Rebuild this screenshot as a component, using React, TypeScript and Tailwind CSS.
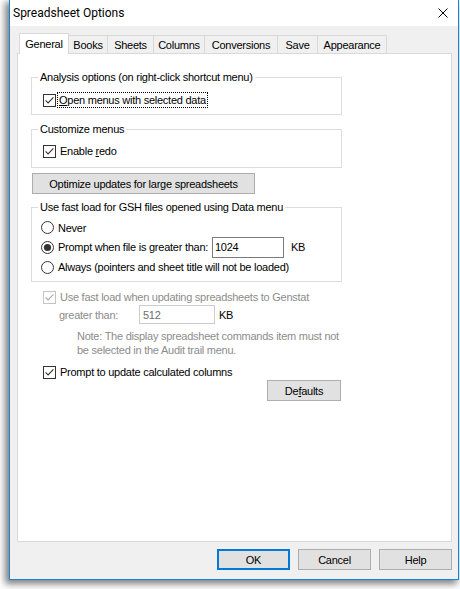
import React from "react";

function CheckBox({ checked = false, disabled = false }: { checked?: boolean; disabled?: boolean }) {
  const edge = disabled ? "#c4c4c4" : "#333333";
  const mark = disabled ? "#a8a8a8" : "#333333";
  return (
    <svg width="13" height="13" viewBox="0 0 13 13" className="shrink-0 block">
      <rect x="0.5" y="0.5" width="12" height="12" fill="#ffffff" stroke={edge} />
      {checked && <path d="M2.6 6.4 L5.1 9 L10.4 3.4" fill="none" stroke={mark} strokeWidth="1.1" />}
    </svg>
  );
}

function Radio({ checked = false }: { checked?: boolean }) {
  return (
    <svg width="13" height="13" viewBox="0 0 13 13" className="shrink-0 block">
      <circle cx="6.5" cy="6.5" r="6" fill="#ffffff" stroke="#333333" />
      {checked && <circle cx="6.5" cy="6.5" r="3.6" fill="#333333" />}
    </svg>
  );
}

function GroupBox({ title, children, className = "" }: { title: string; children: React.ReactNode; className?: string }) {
  return (
    <fieldset className={"w-[311px] border border-[#dcdcdc] " + className}>
      <legend className="ml-[6px] px-[2px] leading-[14px]">{title}</legend>
      {children}
    </fieldset>
  );
}

function PushButton({ children, className = "", isDefault = false }: { children: React.ReactNode; className?: string; isDefault?: boolean }) {
  return (
    <div
      className={
        "flex items-center justify-center bg-[#e1e1e1] " +
        (isDefault ? "border-2 border-[#0078d7] " : "border border-[#adadad] ") +
        className
      }
    >
      {children}
    </div>
  );
}

const tabs = [
  { label: "Books", w: "w-[39px]" },
  { label: "Sheets", w: "w-[46px]" },
  { label: "Columns", w: "w-[51px]" },
  { label: "Conversions", w: "w-[73px]" },
  { label: "Save", w: "w-[40px]" },
  { label: "Appearance", w: "w-[69px]" },
];

export default function App() {
  return (
    <div className="w-[460px] h-[589px] bg-white pl-[9px] overflow-hidden text-[11px] leading-[14px] tracking-[-0.25px] text-black [font-family:'Liberation_Sans',Arial,sans-serif]">
      <div className="w-[450px] h-[580px] border-x border-b border-[#1883d7] bg-[#f0f0f0] flex flex-col shadow-[-3px_3px_7px_1px_rgba(0,0,0,0.5)]">
        {/* caption */}
        <div className="h-[26px] shrink-0 bg-white flex items-center justify-between pl-[3px] pr-[10px]">
          <span className="text-[12px] tracking-normal [font-family:Roboto,'Noto_Sans',sans-serif]">Spreadsheet Options</span>
          <svg width="10" height="10" viewBox="0 0 10 10" className="block">
            <path d="M0.5 0.5 L9.5 9.5 M9.5 0.5 L0.5 9.5" stroke="#000" strokeWidth="1" />
          </svg>
        </div>

        {/* tab strip */}
        <div className="mt-[7px] ml-[9px] flex items-end h-[20px]">
          <div className="relative z-10 w-[50px] h-[21px] -mb-px bg-white border-x border-t border-[#d9d9d9] flex items-center justify-center pb-[1px]">
            General
          </div>
          {tabs.map((t) => (
            <div
              key={t.label}
              className={t.w + " h-[18px] border-t border-r border-[#d9d9d9] flex items-center justify-center"}
            >
              {t.label}
            </div>
          ))}
        </div>

        {/* tab page */}
        <div className="ml-[7px] w-[435px] h-[489px] shrink-0 bg-white border border-[#d9d9d9] pl-[13px] pt-[16px] flex flex-col">
          <GroupBox title="Analysis options (on right-click shortcut menu)">
            <div className="pl-[11px] pt-[8px] pb-[6px] flex items-center">
              <div className="flex items-center h-[16px]">
                <CheckBox checked />
                <span className="ml-[1px] h-[16px] border border-dotted border-black pl-[1px] pr-[1px] leading-[14px]">
                  <span className="underline">O</span>pen menus with selected data
                </span>
              </div>
            </div>
          </GroupBox>

          <GroupBox title="Customize menus" className="mt-[7px]">
            <div className="pl-[11px] pt-[7px] pb-[8px] flex items-center">
              <div className="flex items-center h-[16px]">
                <CheckBox checked />
                <span className="ml-[4px]">
                  Enable <span className="underline">r</span>edo
                </span>
              </div>
            </div>
          </GroupBox>

          <PushButton className="mt-[5px] ml-[1px] w-[223px] h-[21px] shrink-0">
            Optimize updates for large spreadsheets
          </PushButton>

          <GroupBox title="Use fast load for GSH files opened using Data menu" className="mt-[6px]">
            <div className="pl-[9px] pt-[4px] pb-[4px] flex flex-col">
              <div className="h-[19px] flex items-center">
                <Radio />
                <span className="ml-[4px]">Never</span>
              </div>
              <div className="h-[20px] flex items-center">
                <Radio checked />
                <span className="ml-[4px] w-[154px] whitespace-nowrap">Prompt when file is greater than:</span>
                <div className="w-[72px] h-[21px] shrink-0 border border-[#7a7a7a] bg-white flex items-center pl-[2px]">
                  1024
                </div>
                <span className="ml-[7px]">KB</span>
              </div>
              <div className="h-[20px] flex items-center">
                <Radio />
                <span className="ml-[4px]">Always (pointers and sheet title will not be loaded)</span>
              </div>
            </div>
          </GroupBox>

          <div className="mt-[7px] ml-[12px] h-[16px] flex items-center text-[#8c8c8c]">
            <CheckBox checked disabled />
            <span className="ml-[4px]">Use fast load when updating spreadsheets to Genstat</span>
          </div>

          <div className="ml-[28px] h-[19px] flex items-center">
            <span className="w-[80px] text-[#8c8c8c]">greater than:</span>
            <div className="w-[76px] h-[19px] shrink-0 border border-[#cccccc] bg-white flex items-center pl-[3px] text-[#6d6d6d]">
              512
            </div>
            <span className="ml-[4px]">KB</span>
          </div>

          <p className="mt-[5px] ml-[46px] text-[#8c8c8c] leading-[14px]">
            Note: The display spreadsheet commands item must not
            <br />
            be selected in the Audit trail menu.
          </p>

          <div className="mt-[7px] ml-[12px] h-[16px] flex items-center">
            <CheckBox checked />
            <span className="ml-[4px]">Prompt to update calculated columns</span>
          </div>

          <div className="w-[310px] flex justify-end">
            <PushButton className="w-[74px] h-[21px]">
              <span>
                De<span className="underline">f</span>aults
              </span>
            </PushButton>
          </div>
        </div>

        {/* dialog buttons */}
        <div className="mt-[7px] pr-[6px] flex justify-end gap-[8px]">
          <PushButton isDefault className="w-[73px] h-[21px]">OK</PushButton>
          <PushButton className="w-[73px] h-[21px]">Cancel</PushButton>
          <PushButton className="w-[73px] h-[21px]">Help</PushButton>
        </div>
      </div>
    </div>
  );
}
